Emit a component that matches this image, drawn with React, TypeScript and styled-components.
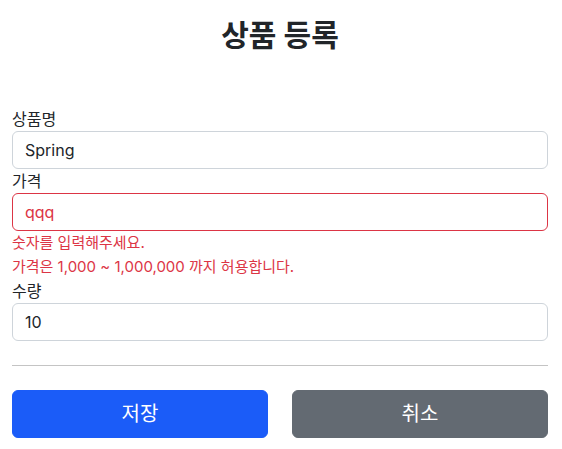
import React from "react";
import styled, { createGlobalStyle } from "styled-components";

const Global = createGlobalStyle`
  * { box-sizing: border-box; }
  body {
    margin: 0;
    background: #fff;
    color: #212529;
    font-family: Inter, "Noto Sans CJK KR", sans-serif;
    font-size: 16px;
    line-height: 1.5;
  }
`;

const Container = styled.div`
  width: 560px;
  padding: 0 12px;
`;

const Header = styled.div`
  padding: 17px 0 54px;
  text-align: center;
`;

const Title = styled.h2`
  margin: 0;
  font-size: 30px;
  line-height: 36px;
  font-weight: 700;
  color: #212529;
`;

const Form = styled.form`
  display: flex;
  flex-direction: column;
`;

const Label = styled.label`
  display: block;
  font-size: 16px;
  line-height: 24px;
`;

const Input = styled.input<{ $invalid?: boolean }>`
  display: block;
  width: 100%;
  height: 38px;
  padding: 6px 12px;
  font-family: inherit;
  font-size: 16px;
  line-height: 24px;
  color: ${(p) => (p.$invalid ? "#dc3545" : "#212529")};
  background: #fff;
  border: 1px solid ${(p) => (p.$invalid ? "#dc3545" : "#ced4da")};
  border-radius: 6px;
  outline: none;
`;

const ErrorText = styled.div`
  color: #dc3545;
  font-size: 15px;
  line-height: 24px;
`;

const Divider = styled.hr`
  margin: 24px 0;
  border: 0;
  border-top: 1px solid #c4c4c4;
`;

const ButtonRow = styled.div`
  display: grid;
  grid-template-columns: 1fr 1fr;
  gap: 24px;
`;

const Button = styled.button<{ $variant: "primary" | "secondary" }>`
  height: 48px;
  padding: 8px 16px;
  font-family: inherit;
  font-size: 20px;
  line-height: 30px;
  color: #fff;
  border: 1px solid ${(p) => (p.$variant === "primary" ? "#1b5cf8" : "#636a72")};
  background: ${(p) => (p.$variant === "primary" ? "#1b5cf8" : "#636a72")};
  border-radius: 6px;
  cursor: pointer;
`;

export default function App() {
  return (
    <>
      <Global />
      <Container>
        <Header>
          <Title>상품 등록</Title>
        </Header>
        <Form onSubmit={(e) => e.preventDefault()}>
          <Label htmlFor="itemName">상품명</Label>
          <Input id="itemName" defaultValue="Spring" />
          <Label htmlFor="price">가격</Label>
          <Input id="price" defaultValue="qqq" $invalid />
          <ErrorText>숫자를 입력해주세요.</ErrorText>
          <ErrorText>가격은 1,000 ~ 1,000,000 까지 허용합니다.</ErrorText>
          <Label htmlFor="quantity">수량</Label>
          <Input id="quantity" defaultValue="10" />
          <Divider />
          <ButtonRow>
            <Button type="submit" $variant="primary">저장</Button>
            <Button type="button" $variant="secondary">취소</Button>
          </ButtonRow>
        </Form>
      </Container>
    </>
  );
}
